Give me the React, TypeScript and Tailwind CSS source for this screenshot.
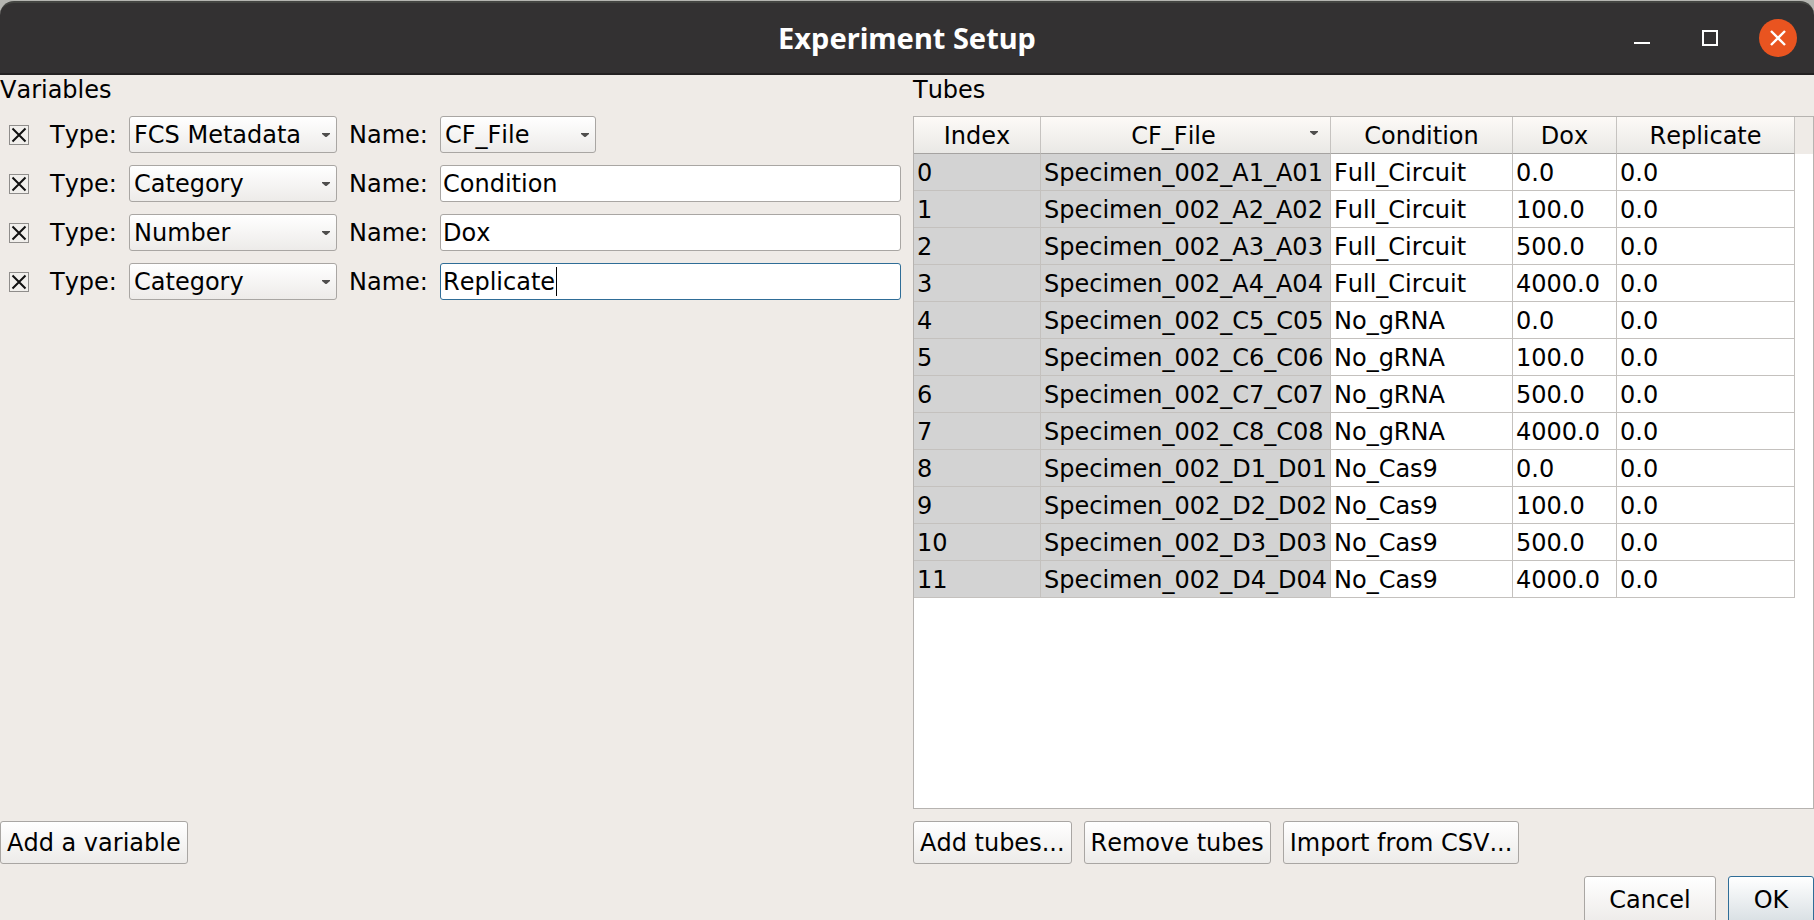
import { useState } from "react";

const variables = [
  { type: "FCS Metadata", name: "CF_File" },
  { type: "Category", name: "Condition" },
  { type: "Number", name: "Dox" },
  { type: "Category", name: "Replicate" },
];

const conditions = ["Full_Circuit", "No_gRNA", "No_Cas9"];
const doses = ["0.0", "100.0", "500.0", "4000.0"];
const wells = ["A1_A01", "A2_A02", "A3_A03", "A4_A04", "C5_C05", "C6_C06", "C7_C07", "C8_C08", "D1_D01", "D2_D02", "D3_D03", "D4_D04"];

const tubes = wells.map((well, i) => ({
  file: `Specimen_002_${well}`,
  condition: conditions[Math.floor(i / 4)],
  dox: doses[i % 4],
  replicate: "0.0",
}));

const raised = "rounded-[3px] border border-[#a9a6a3] bg-linear-to-b from-white to-[#edebe9]";

function Arrow({ place }: { place: string }) {
  return (
    <svg className={`pointer-events-none absolute h-[5px] w-2 ${place}`} viewBox="0 0 8 5" aria-hidden="true">
      <path d="M0 0h8v1L4.5 4h-1L0 1z" fill="#4f4e4d" />
    </svg>
  );
}

function Combo({ id, value, options, width }: { id: string; value: string; options: string[]; width: string }) {
  return (
    <span className={`relative ${width}`}>
      <select id={id} defaultValue={value} className={`h-[37px] w-full appearance-none pl-1 outline-none ${raised}`}>
        {options.map((o) => (
          <option key={o}>{o}</option>
        ))}
      </select>
      <Arrow place="top-[17px] right-[7px]" />
    </span>
  );
}

function VariableRow({ index, type, name }: { index: number; type: string; name: string }) {
  const [text, setText] = useState(name);
  const typeId = `type-${index}`;
  const nameId = `name-${index}`;
  const active = index === 3;
  return (
    <li className="flex items-center">
      <button type="button" aria-label={`Remove ${name}`} className="ml-[9px] flex size-5 items-center justify-center border border-[#8f8d8b] bg-[#f1efec]">
        <svg className="size-4" viewBox="0 0 16 16" fill="none" stroke="#111" strokeWidth="2" aria-hidden="true">
          <path d="M1.5 1.5l13 13M14.5 1.5l-13 13" />
        </svg>
      </button>
      <label htmlFor={typeId} className="ml-[21px] w-[79px]">
        Type:
      </label>
      <Combo id={typeId} value={type} options={["Category", "Number", "True/False", "FCS Metadata"]} width="w-52" />
      <label htmlFor={nameId} className="ml-3 w-[91px]">
        Name:
      </label>
      {index === 0 ? (
        <Combo id={nameId} value={name} options={["CF_File"]} width="w-[156px]" />
      ) : (
        <span className="relative flex-1">
          <input
            id={nameId}
            value={text}
            onChange={(e) => setText(e.target.value)}
            className={`h-[37px] w-full rounded-[3px] border bg-white px-[2px] outline-none ${active ? "border-[#2f6d97]" : "border-[#a9a6a3]"}`}
          />
          {active && (
            <span className="pointer-events-none absolute top-1 left-1 flex h-[29px] border-r border-black" aria-hidden="true">
              <span className="invisible">{text}</span>
            </span>
          )}
        </span>
      )}
    </li>
  );
}

function PushButton({ children }: { children: string }) {
  return (
    <button type="button" className={`h-[43px] px-[6px] ${raised}`}>
      {children}
    </button>
  );
}

const th = "relative border-r border-b border-r-[#c6c3c0] border-b-[#a5a3a1] px-0 pt-[2px] pb-0 font-normal";
const td = "h-[37px] border-r border-b border-[#c4c1be] pt-[2px] pb-0 pl-[3px]";

export default function App() {
  return (
    <div className="flex h-screen flex-col overflow-hidden bg-[#efebe7] font-['DejaVu_Sans',sans-serif] text-[24px] leading-7 text-black [font-kerning:none]">
      <div className="bg-[#b5b5b1] pt-px">
        <header className="grid h-[74px] grid-cols-[1fr_auto_1fr] items-center rounded-t-[14px] border-t-2 border-b-2 border-t-[#444542] border-b-[#232122] bg-[#333132] text-white">
          <h1 className="col-start-2 font-['Noto_Sans',sans-serif] text-[29px] font-bold">Experiment Setup</h1>
          <div className="flex items-center justify-end pr-[17px]">
            <button type="button" aria-label="Minimize" className="mr-[52px]">
              <svg className="size-4" viewBox="0 0 16 16" aria-hidden="true">
                <path d="M0 12h16v2H0z" fill="#fff" />
              </svg>
            </button>
            <button type="button" aria-label="Maximize" className="mr-[41px]">
              <svg className="size-4" viewBox="0 0 16 16" aria-hidden="true">
                <path d="M1 1h14v14H1z" fill="none" stroke="#fff" strokeWidth="2" />
              </svg>
            </button>
            <button type="button" aria-label="Close" className="flex size-[38px] items-center justify-center rounded-full bg-[#e95420]">
              <svg className="size-4" viewBox="0 0 16 16" aria-hidden="true">
                <path d="M1 1l14 14M15 1L1 15" fill="none" stroke="#fff" strokeWidth="2.4" />
              </svg>
            </button>
          </div>
        </header>
      </div>

      <main className="flex min-h-0 flex-1 gap-3">
        <section className="flex flex-1 flex-col">
          <h2 className="pt-px">Variables</h2>
          <ul className="mt-3 flex flex-1 flex-col gap-3">
            {variables.map((v, i) => (
              <VariableRow key={v.name} index={i} type={v.type} name={v.name} />
            ))}
          </ul>
          <div className="flex">
            <PushButton>Add a variable</PushButton>
          </div>
        </section>

        <section className="flex flex-1 flex-col">
          <h2 className="pt-px">Tubes</h2>
          <div className="mt-3 mb-3 min-h-0 flex-1 border border-[#b6b3b0] bg-white">
            <div className="bg-[#efebe7] pr-[18px]">
              <table className="w-full table-fixed border-separate border-spacing-0 text-left">
                <colgroup>
                  <col className="w-[127px]" />
                  <col className="w-[290px]" />
                  <col className="w-[182px]" />
                  <col className="w-[104px]" />
                  <col />
                </colgroup>
                <thead>
                  <tr className="h-[37px] bg-linear-to-b from-[#fdfaf7] to-[#e9e8e5] text-center">
                    <th className={th}>Index</th>
                    <th className={th}>
                      <span className="pr-6">CF_File</span>
                      <Arrow place="top-[14px] right-3" />
                    </th>
                    <th className={th}>Condition</th>
                    <th className={th}>Dox</th>
                    <th className={th}>Replicate</th>
                  </tr>
                </thead>
                <tbody className="bg-white shadow-[18px_0_0_#fff]">
                  {tubes.map((t, i) => (
                    <tr key={t.file}>
                      <td className={`${td} bg-[#d3d3d3]`}>{i}</td>
                      <td className={`${td} bg-[#d3d3d3]`}>{t.file}</td>
                      <td className={td}>{t.condition}</td>
                      <td className={td}>{t.dox}</td>
                      <td className={td}>{t.replicate}</td>
                    </tr>
                  ))}
                </tbody>
              </table>
            </div>
          </div>
          <div className="flex gap-3">
            <PushButton>Add tubes...</PushButton>
            <PushButton>Remove tubes</PushButton>
            <PushButton>Import from CSV...</PushButton>
          </div>
        </section>
      </main>

      <footer className="mt-3 flex h-11 items-start justify-end gap-3 overflow-hidden">
        <button type="button" className={`h-12 w-[132px] shrink-0 ${raised}`}>
          Cancel
        </button>
        <button type="button" className="h-12 w-[86px] shrink-0 rounded-[3px] border border-[#2f6d97] bg-linear-to-b from-white to-[#d8dfe3]">
          OK
        </button>
      </footer>
    </div>
  );
}
